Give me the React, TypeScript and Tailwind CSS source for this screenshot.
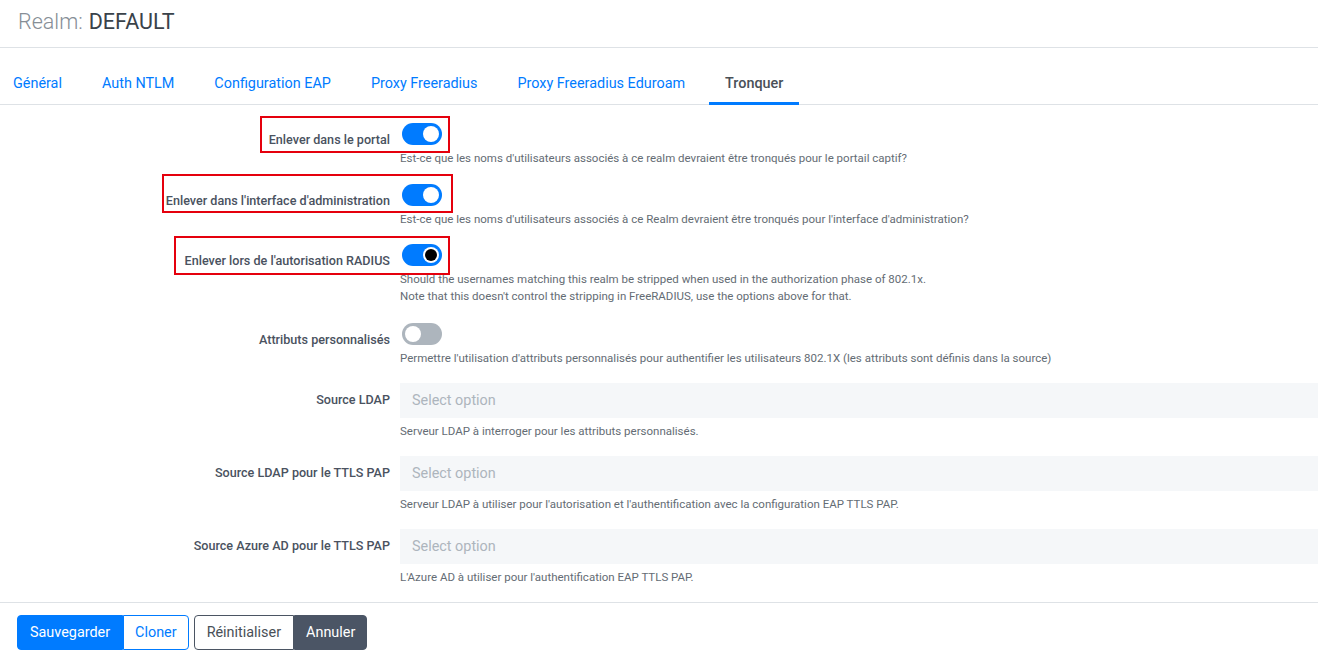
import React from "react";

const FONT = { fontFamily: "Roboto, 'Noto Sans', 'Liberation Sans', sans-serif" };

function Toggle({ on, focus }: { on: boolean; focus?: boolean }) {
  return (
    <div
      className={`relative h-[22px] w-[40px] rounded-full ${on ? "bg-[#007bff]" : "bg-[#adb5bd]"}`}
    >
      {focus ? (
        <div className="absolute top-[3px] right-[3px] h-[16px] w-[16px] rounded-full bg-white flex items-center justify-center">
          <div className="h-[12px] w-[12px] rounded-full bg-black" />
        </div>
      ) : (
        <div
          className={`absolute top-[3px] h-[16px] w-[16px] rounded-full bg-white ${on ? "right-[3px]" : "left-[3px]"}`}
        />
      )}
    </div>
  );
}

function Help({ children }: { children: React.ReactNode }) {
  return <div className="text-[11.5px] leading-[17px] text-[#646c74]">{children}</div>;
}

function ToggleRow({
  label,
  on,
  focus,
  help,
  mt,
  box,
}: {
  label: string;
  on: boolean;
  focus?: boolean;
  help: React.ReactNode;
  mt: string;
  box?: string;
}) {
  return (
    <div className={`relative grid grid-cols-[400px_1fr] ${mt}`}>
      {box && <div className={`absolute border-2 border-[#e5000d] ${box}`} />}
      <div className="pr-[10px] pt-[13px] text-right text-[12.6px] leading-[18px] font-medium text-[#4a5260]">
        {label}
      </div>
      <div className="pt-[5px]">
        <div className="pl-[2px]">
          <Toggle on={on} focus={focus} />
        </div>
        <div className="mt-[5px]">{help}</div>
      </div>
    </div>
  );
}

function SelectRow({ label, help, mt }: { label: string; help: string; mt: string }) {
  return (
    <div className={`grid grid-cols-[400px_1fr] ${mt}`}>
      <div className="pr-[10px] h-[35px] flex items-center justify-end text-[12.6px] font-medium text-[#4a5260]">
        {label}
      </div>
      <div>
        <div className="h-[35px] bg-[#f5f7f9] flex items-center pl-[12px] text-[14.4px] text-[#adb5bd]">
          Select option
        </div>
        <div className="mt-[5px]">
          <Help>{help}</Help>
        </div>
      </div>
    </div>
  );
}

export default function App() {
  const tabs = [
    "Général",
    "Auth NTLM",
    "Configuration EAP",
    "Proxy Freeradius",
    "Proxy Freeradius Eduroam",
    "Tronquer",
  ];
  return (
    <div className="w-[1318px] h-[663px] bg-white overflow-hidden" style={FONT}>
      <div className="h-[48px] border-b border-[#dee2e6] flex items-center pl-[18px] pb-[2px]">
        <span className="text-[21.5px] font-light text-[#868e96]">Realm:</span>
        <span className="text-[21.5px] font-normal text-[#3a424a] ml-[6px]">DEFAULT</span>
      </div>
      <div className="pt-[15px] border-b border-[#dee2e6] flex gap-[8px] -ml-[3px]">
        {tabs.map((t) => {
          const active = t === "Tronquer";
          return (
            <div
              key={t}
              className={`relative h-[41px] px-[16px] flex items-center text-[14.4px] ${
                active ? "text-[#495057] font-medium" : "text-[#007bff]"
              }`}
            >
              {t}
              {active && <div className="absolute left-0 right-0 bottom-[-1px] h-[3px] bg-[#007bff]" />}
            </div>
          );
        })}
      </div>

      <div className="pt-[13px] h-[497px]">
        <ToggleRow
          label="Enlever dans le portal"
          on
          mt="mt-0"
          box="left-[260px] top-[-2px] w-[190px] h-[37px]"
          help={<Help>Est-ce que les noms d'utilisateurs associés à ce realm devraient être tronqués pour le portail captif?</Help>}
        />
        <ToggleRow
          label="Enlever dans l'interface d'administration"
          on
          mt="mt-[12px]"
          box="left-[162px] top-[-5px] w-[291px] h-[39px]"
          help={<Help>Est-ce que les noms d'utilisateurs associés à ce Realm devraient être tronqués pour l'interface d'administration?</Help>}
        />
        <ToggleRow
          label="Enlever lors de l'autorisation RADIUS"
          on
          focus
          mt="mt-[11px]"
          box="left-[174px] top-[-3px] w-[276px] h-[39px]"
          help={
            <>
              <Help>Should the usernames matching this realm be stripped when used in the authorization phase of 802.1x.</Help>
              <Help>Note that this doesn't control the stripping in FreeRADIUS, use the options above for that.</Help>
            </>
          }
        />
        <ToggleRow
          label="Attributs personnalisés"
          on={false}
          mt="mt-[13px]"
          help={<Help>Permettre l'utilisation d'attributs personnalisés pour authentifier les utilisateurs 802.1X (les attributs sont définis dans la source)</Help>}
        />
        <SelectRow
          label="Source LDAP"
          mt="mt-[16px]"
          help="Serveur LDAP à interroger pour les attributs personnalisés."
        />
        <SelectRow
          label="Source LDAP pour le TTLS PAP"
          mt="mt-[16px]"
          help="Serveur LDAP à utiliser pour l'autorisation et l'authentification avec la configuration EAP TTLS PAP."
        />
        <SelectRow
          label="Source Azure AD pour le TTLS PAP"
          mt="mt-[16px]"
          help="L'Azure AD à utiliser pour l'authentification EAP TTLS PAP."
        />
      </div>

      <div className="border-t border-[#dee2e6] pt-[12px] pl-[17px] flex gap-[5px]">
        <div className="flex">
          <div className="h-[35px] px-[12px] flex items-center bg-[#007bff] text-white text-[14.4px] rounded-l-[4px] border border-[#007bff]">
            Sauvegarder
          </div>
          <div className="h-[35px] px-[11px] flex items-center bg-white text-[#007bff] text-[14.4px] rounded-r-[4px] border border-[#007bff]">
            Cloner
          </div>
        </div>
        <div className="flex">
          <div className="h-[35px] px-[12px] flex items-center bg-white text-[#495057] text-[14.4px] rounded-l-[4px] border border-[#4b5563]">
            Réinitialiser
          </div>
          <div className="h-[35px] px-[11px] flex items-center bg-[#4b5565] text-white text-[14.4px] rounded-r-[4px] border border-[#4b5565]">
            Annuler
          </div>
        </div>
      </div>
    </div>
  );
}
